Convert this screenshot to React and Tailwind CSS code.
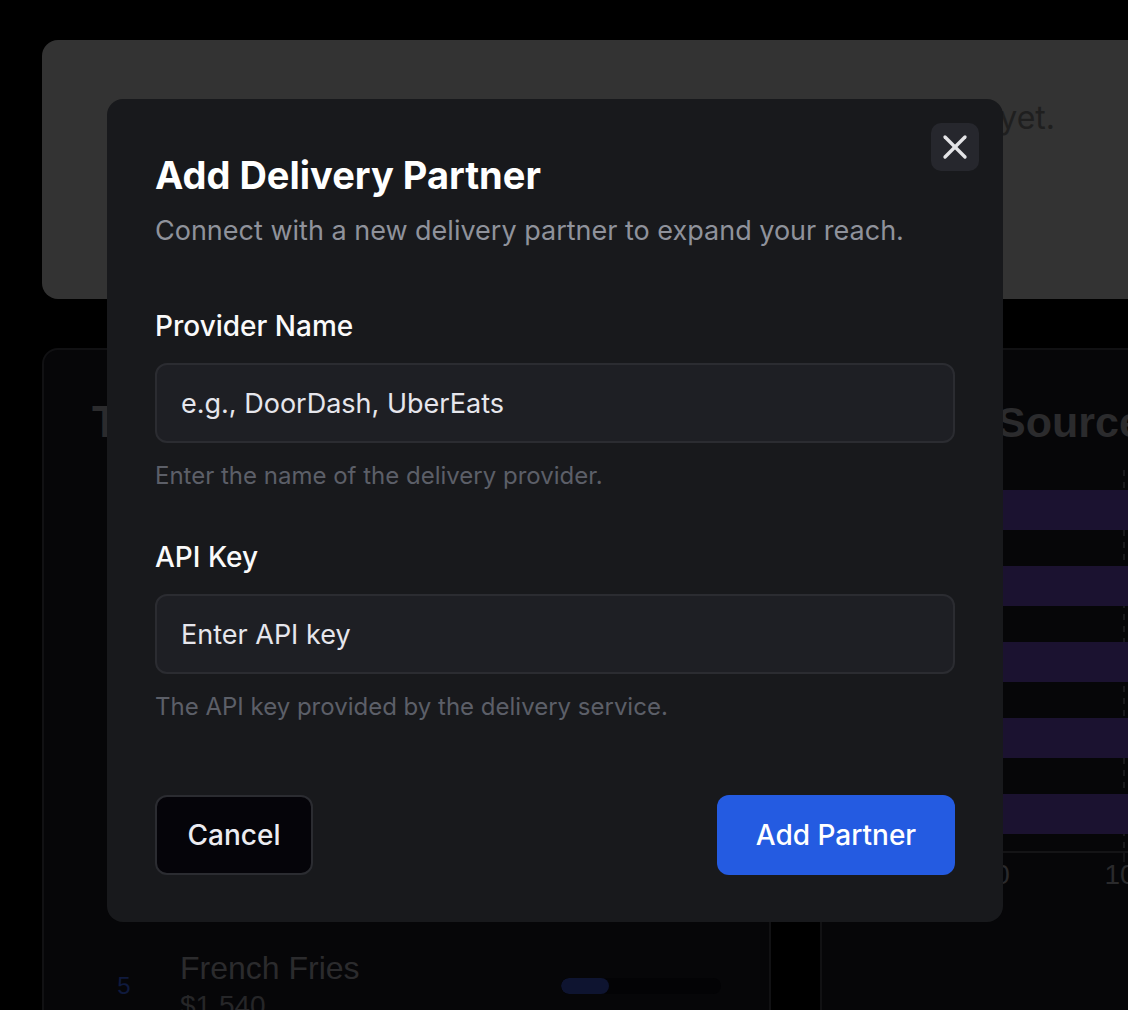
import React from 'react';
import { X } from 'lucide-react';

function Row({ n, name, price, pct }) {
  return (
    <div className="flex items-center h-[104px]">
      <div className="w-[64px] text-center text-[24px] text-[#0f1a3d]">{n}</div>
      <div className="ml-[24px] flex-1">
        <div className="text-[32px] leading-[40px] text-[#2b2b2d]">{name}</div>
        <div className="text-[28px] leading-[36px] text-[#262628]">{price}</div>
      </div>
      <div className="w-[160px] h-[16px] rounded-full bg-[#030305] overflow-hidden">
        <div className="h-full rounded-full bg-[#0e1430]" style={{ width: `${pct}%` }} />
      </div>
    </div>
  );
}

function Field({ label, placeholder, help, labelMt }) {
  return (
    <div className={labelMt}>
      <label className="block text-[28px] leading-[40px] font-medium text-[#fafafa]">{label}</label>
      <input
        readOnly
        placeholder={placeholder}
        className="mt-[17px] block w-full h-[80px] rounded-[12px] border-2 border-[#2b2c31] bg-[#1e1f24] px-[24px] text-[27px] text-[#e6e6ec] placeholder:text-[#e6e6ec] outline-none"
      />
      <p className="mt-[17px] text-[24px] leading-[32px] text-[#5c5f68]">{help}</p>
    </div>
  );
}

export default function App() {
  return (
    <div className="relative w-[1128px] h-[1010px] overflow-hidden bg-black [font-family:'Liberation_Sans',Arial,sans-serif]">
      <div className="pl-[42px] pt-[40px] w-[1400px]">
        <div className="w-[1200px] h-[259px] rounded-[16px] bg-[#333333] flex justify-end items-start pr-[187px] pt-[58px]">
          <p className="text-[32px] leading-[40px] text-[#1f1f1f] [font-family:Inter,sans-serif]">No delivery partners connected yet.</p>
        </div>
        <div className="mt-[49px] flex gap-[49px]">
          <div className="w-[729px] h-[900px] shrink-0 rounded-[16px] border-2 border-[#111113] bg-[#060608] p-[48px]">
            <h2 className="text-[44px] leading-[48px] font-bold text-[#2b2b2d]">Top Selling Items</h2>
            <div className="mt-[72px]">
              <Row n="1" name="Classic Burger" price="$4,820" pct={100} />
              <Row n="2" name="Margherita Pizza" price="$3,960" pct={82} />
              <Row n="3" name="Chicken Wings" price="$2,870" pct={60} />
              <Row n="4" name="Caesar Salad" price="$2,110" pct={44} />
              <Row n="5" name="French Fries" price="$1,540" pct={30} />
            </div>
          </div>
          <div className="w-[600px] h-[900px] shrink-0 rounded-[16px] border-2 border-[#111113] bg-[#060608] p-[48px]">
            <h2 className="text-[43px] leading-[48px] font-bold text-[#2b2b2d] whitespace-nowrap -ml-[2px]">Order Sources</h2>
            <svg className="mt-[24px] block" width="500" height="440" viewBox="0 0 500 440">
              <line x1="254" y1="0" x2="254" y2="382" stroke="#19191c" strokeWidth="2" strokeDasharray="6 6" />
              {[20, 96, 172, 248, 324].map((y) => (
                <rect key={y} x="132" y={y} width="400" height="40" fill="#1b1230" />
              ))}
              <line x1="0" y1="382" x2="500" y2="382" stroke="#141416" strokeWidth="2" />
              <line x1="254" y1="382" x2="254" y2="392" stroke="#141416" strokeWidth="2" />
              <text x="132" y="414" textAnchor="middle" fontSize="28" fill="#2a2a2c" fontFamily="Liberation Sans, Arial, sans-serif">0</text>
              <text x="250" y="414" textAnchor="middle" fontSize="28" fill="#2a2a2c" fontFamily="Liberation Sans, Arial, sans-serif">10</text>
            </svg>
          </div>
        </div>
      </div>

      <div className="absolute left-[107px] top-[99px] w-[896px] h-[823px] rounded-[16px] bg-[#18191c] px-[48px] pt-[48px] [font-family:Inter,sans-serif]">
        <button className="absolute right-[24px] top-[24px] w-[48px] h-[48px] rounded-[10px] bg-[#26272d] flex items-center justify-center text-[#e4e4e7]">
          <X size={40} strokeWidth={2} />
        </button>
        <h2 className="text-[38px] leading-[56px] font-bold text-white">Add Delivery Partner</h2>
        <p className="mt-[8px] text-[27px] leading-[40px] text-[#8f929b]">Connect with a new delivery partner to expand your reach.</p>
        <Field labelMt="mt-[55px]" label="Provider Name" placeholder="e.g., DoorDash, UberEats" help="Enter the name of the delivery provider." />
        <Field labelMt="mt-[45px]" label="API Key" placeholder="Enter API key" help="The API key provided by the delivery service." />
        <div className="mt-[72px] flex justify-between">
          <button className="h-[80px] w-[158px] rounded-[12px] border-2 border-[#2b2c31] bg-[#050409] text-[28px] font-medium text-[#ececf1]">Cancel</button>
          <button className="h-[80px] w-[238px] rounded-[12px] bg-[#245be1] text-[28px] font-medium text-white">Add Partner</button>
        </div>
      </div>
    </div>
  );
}
